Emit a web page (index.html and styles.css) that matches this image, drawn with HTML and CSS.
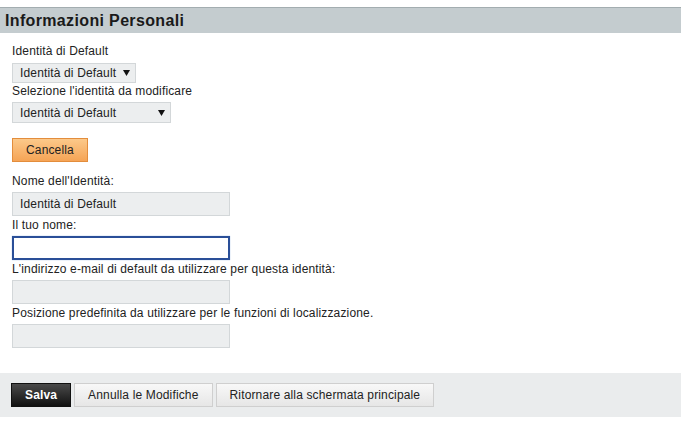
FILE: index.html
```html
<!DOCTYPE html>
<html lang="it">
<head>
    <meta charset="UTF-8">
    <title>Informazioni Personali</title>
    <link rel="stylesheet" href="styles.css">
</head>
<body>
    <h1 class="header">Informazioni Personali</h1>

    <div class="content">
        <label class="label first">Identità di Default</label>
        <div class="dropdown">
            <span>Identità di Default</span>
            <svg class="arrow" width="7" height="6" viewBox="0 0 7 6"><polygon points="0,0 7,0 3.5,6" fill="#111"/></svg>
        </div>

        <label class="label">Selezione l'identità da modificare</label>
        <div class="dropdown wide">
            <span>Identità di Default</span>
            <svg class="arrow" width="7" height="6" viewBox="0 0 7 6"><polygon points="0,0 7,0 3.5,6" fill="#111"/></svg>
        </div>

        <div class="actions">
            <button type="button" class="btn-orange">Cancella</button>
        </div>

        <div class="field first">
            <label class="label" for="ident">Nome dell'Identità:</label>
            <input type="text" id="ident" class="input" value="Identità di Default" readonly>
        </div>
        <div class="field">
            <label class="label" for="nome">Il tuo nome:</label>
            <input type="text" id="nome" class="input focused">
        </div>
        <div class="field">
            <label class="label" for="email">L'indirizzo e-mail di default da utilizzare per questa identità:</label>
            <input type="text" id="email" class="input">
        </div>
        <div class="field">
            <label class="label" for="pos">Posizione predefinita da utilizzare per le funzioni di localizzazione.</label>
            <input type="text" id="pos" class="input">
        </div>
    </div>

    <div class="footer">
        <button type="button" class="btn btn-dark">Salva</button>
        <button type="button" class="btn">Annulla le Modifiche</button>
        <button type="button" class="btn">Ritornare alla schermata principale</button>
    </div>
</body>
</html>
```

FILE: styles.css
```css
body {
    margin: 0;
    font-family: "Liberation Sans", Arial, sans-serif;
    font-size: 12px;
    letter-spacing: 0.15px;
    color: #222;
    background: #fff;
}
.header {
    margin: 7px 0 0;
    padding-left: 5px;
    height: 25px;
    line-height: 26px;
    font-size: 16px;
    font-weight: bold;
    letter-spacing: 0.35px;
    color: #1a1a1a;
    background-color: #c4cccf;
    border-top: 1px solid #a3adb0;
}
.content {
    padding: 0 12px;
}
.label {
    display: block;
    line-height: 14px;
    margin: 1px 0 4px;
    color: #222;
}
.label.first {
    margin-top: 11px;
    margin-bottom: 5px;
}
.dropdown {
    display: flex;
    align-items: center;
    gap: 7px;
    width: fit-content;
    height: 18px;
    padding: 0 5px 0 7px;
    background: #eceeef;
    border: 1px solid #d3d7d9;
    color: #222;
}
.dropdown.wide {
    width: 145px;
    justify-content: space-between;
    height: 19px;
}
.arrow {
    display: block;
}
.actions {
    margin-top: 15px;
}
.btn-orange {
    height: 24px;
    padding: 0 13px;
    font-family: inherit;
    font-size: 12px;
    letter-spacing: inherit;
    color: #222;
    background: linear-gradient(#fcc98a, #f5a456);
    border: 1px solid #e38d3c;
    cursor: pointer;
}
.field.first {
    margin-top: 12px;
}
.field .label {
    margin: 2px 0 4px;
}
.field.first .label {
    margin-top: 0;
}
.input {
    display: block;
    box-sizing: border-box;
    width: 218px;
    height: 24px;
    margin: 0;
    padding: 0 7px;
    font-family: inherit;
    font-size: 12px;
    letter-spacing: inherit;
    color: #222;
    background: #eceeef;
    border: 1px solid #d3d7d9;
    outline: none;
}
.input.focused {
    background: #fff;
    border: 2px solid #2a4f98;
    box-shadow: 0 0 1px #8fb0e0;
}
.footer {
    display: flex;
    gap: 3px;
    margin-top: 25px;
    padding: 10px 11px;
    background: #eaeced;
}
.btn {
    height: 24px;
    padding: 0 13px;
    font-family: inherit;
    font-size: 12px;
    letter-spacing: inherit;
    color: #222;
    background: linear-gradient(#f8f8f8, #e6e6e6);
    border: 1px solid #cfcfcf;
    cursor: pointer;
}
.btn-dark {
    font-weight: bold;
    color: #fff;
    background: linear-gradient(#4a4a4a, #111);
    border-color: #111;
}
```
